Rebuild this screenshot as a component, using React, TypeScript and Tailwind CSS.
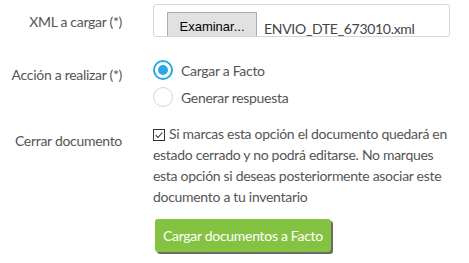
import React from 'react';

const FONT = { fontFamily: 'Lato, "Open Sans", sans-serif' };

export default function App() {
  return (
    <div className="w-[469px] h-[263px] bg-white overflow-hidden text-[14px] tracking-[-0.3px] text-[#555]" style={FONT}>
      <div className="grid grid-cols-[122px_298px] gap-x-[31px] pt-[4px]">
        {/* XML */}
        <div className="text-right pt-[9px] leading-[18px]">XML a cargar (*)</div>
        <div className="h-[33px] w-[297px] border border-[#cfd8dc] rounded-[3px] flex items-start pl-[13px] pt-[7px] gap-[7px]">
          <div className="h-[24px] w-[90px] shrink-0 bg-[#e1e1e1] border border-b-0 border-[#adadad] flex justify-center pt-[6px] text-[13px] leading-[15px] tracking-normal text-black" style={{ fontFamily: '"Liberation Sans", Arial, sans-serif' }}>
            Examinar...
          </div>
          <div className="pt-[8px] leading-[18px] text-[#444]">ENVIO_DTE_673010.xml</div>
        </div>

        {/* Acción */}
        <div className="text-right mt-[24px] pt-[5px] leading-[18px]">Acción a realizar (*)</div>
        <div className="mt-[23px] flex flex-col gap-[7px]">
          <label className="flex items-center gap-[8px] h-[20px]">
            <span className="w-[20px] h-[20px] rounded-full border-2 border-[#29a9e1] flex items-center justify-center">
              <span className="w-[10px] h-[10px] rounded-full bg-[#29a9e1]" />
            </span>
            <span>Cargar a Facto</span>
          </label>
          <label className="flex items-center gap-[8px] h-[20px]">
            <span className="w-[20px] h-[20px] rounded-full border border-[#cfd8dc]" />
            <span>Generar respuesta</span>
          </label>
        </div>

        {/* Cerrar */}
        <div className="text-right mt-[18px] pt-[5px] leading-[21px]">Cerrar documento</div>
        <div className="mt-[16px] leading-[21px]">
          <span className="inline-flex w-[12px] h-[12px] border border-[#333] align-[-1px] mr-[4px] items-center justify-center">
            <svg viewBox="0 0 12 12" className="w-[10px] h-[10px]">
              <path d="M2 6.2 L4.8 9 L10 3" fill="none" stroke="#333" strokeWidth="1.3" />
            </svg>
          </span>
          Si marcas esta opción el documento quedará en estado cerrado y no podrá editarse. No marques esta opción si deseas posteriormente asociar este documento a tu inventario
        </div>

        {/* Button */}
        <div />
        <div className="mt-[12px] pl-[2px]">
          <button className="h-[33px] px-[8px] rounded-[3px] bg-[#84c341] text-white text-[14px] tracking-[-0.3px] shadow-[2px_2px_0_#6b6b6b]">
            Cargar documentos a Facto
          </button>
        </div>
      </div>
    </div>
  );
}
